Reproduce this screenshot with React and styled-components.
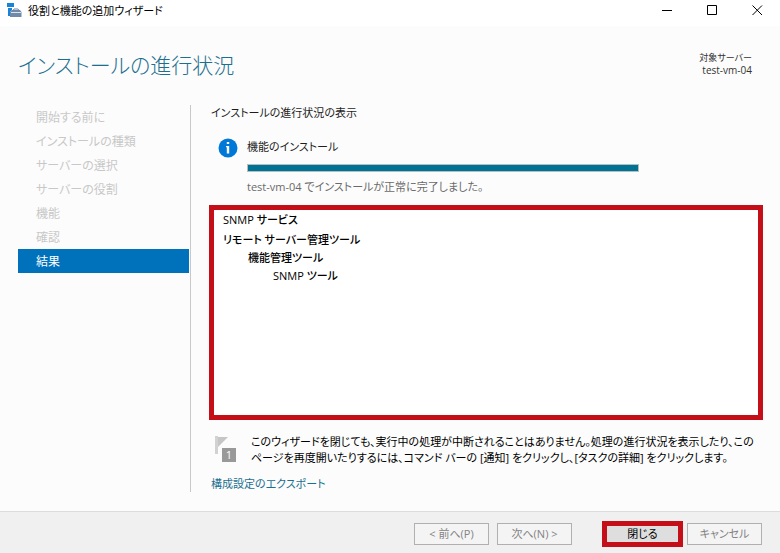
import React from "react";
import styled, { createGlobalStyle } from "styled-components";

const GlobalStyle = createGlobalStyle`
  *, *::before, *::after { box-sizing: border-box; }
  body {
    margin: 0;
    background: #fcfcfc;
    color: #1e1e1e;
    font-family: "Open Sans", "Noto Sans CJK JP", sans-serif;
    font-size: 11px;
    line-height: 18px;
    font-feature-settings: "palt";
  }
  button { font: inherit; font-feature-settings: inherit; }
`;

const Window = styled.div`
  display: flex;
  flex-direction: column;
  min-height: 100vh;
`;

const TitleBar = styled.div`
  display: flex;
  align-items: center;
  height: 26px;
  padding-left: 7px;
  background: #fff;
  color: #000;
  & > svg { margin-bottom: 6px; }
`;

const WindowTitle = styled.span`
  flex: 1;
  margin-left: 6px;
  padding-bottom: 4px;
  white-space: nowrap;
`;

const CaptionButton = styled.button`
  display: flex;
  align-items: center;
  justify-content: center;
  width: 45px;
  height: 26px;
  padding: 0 0 6px;
  border: 0;
  background: transparent;
  color: #000;
`;

const Header = styled.header`
  display: flex;
  justify-content: space-between;
  align-items: flex-start;
  height: 79px;
  padding: 22px 28px 0 18px;
`;

const Heading = styled.h1`
  margin: 0;
  color: #1b6f8f;
  font-size: 21px;
  font-weight: 300;
  line-height: 34px;
  white-space: nowrap;
`;

const Target = styled.div`
  padding-top: 3px;
  color: #333;
  line-height: 13px;
  text-align: right;
  white-space: nowrap;
`;

const TargetLabel = styled.div`
  font-size: 9px;
`;

const TargetName = styled.div`
  font-size: 10px;
`;

const Body = styled.div`
  display: flex;
  flex: 1;
  padding: 0 17px 19px 18px;
`;

const Steps = styled.nav`
  flex: 0 0 173px;
  padding-right: 1px;
  border-right: 1px solid #c8c8c8;
`;

const StepList = styled.ol`
  margin: 0;
  padding: 0;
  list-style: none;
`;

const Step = styled.li`
  height: 24px;
  padding-left: 18px;
  font-size: 12px;
  line-height: 26px;
  color: ${(p) => (p.$current ? "#fff" : "#c8c8c8")};
  background: ${(p) => (p.$current ? "#0072bc" : "transparent")};
`;

const Main = styled.main`
  display: flex;
  flex: 1;
  flex-direction: column;
  min-width: 0;
  padding-left: 18px;
`;

const Intro = styled.p`
  margin: 0 0 16px 2px;
  line-height: 16px;
`;

const Status = styled.section`
  display: grid;
  grid-template-columns: 20px 1fr;
  column-gap: 9px;
  padding-left: 9px;
  margin-bottom: 10px;
  & > svg { margin-top: 1px; }
`;

const StatusTitle = styled.div`
  line-height: 20px;
`;

const Progress = styled.div`
  width: 76%;
  height: 8px;
  margin: 7px 0;
  border: 1px solid #bcbcbc;
  background: #007394;
`;

const StatusText = styled.div`
  color: #6a6a6a;
  line-height: 16px;
`;

const Results = styled.ul`
  flex: 1;
  min-height: 120px;
  margin: 0;
  padding: 1px 9px;
  border: 5px solid #c50f18;
  background: #fff;
  color: #000;
  font-weight: 500;
  list-style: none;
`;

const Result = styled.li`
  padding-left: ${(p) => p.$level * 25}px;
  margin-bottom: ${(p) => (p.$spaced ? 2 : 0)}px;
`;

const Note = styled.div`
  display: flex;
  gap: 14px;
  margin-top: 14px;
  padding-left: 6px;
  color: #000;
  & > svg { flex: none; margin-top: 2px; }
`;

const NoteText = styled.p`
  margin: 0;
  line-height: 16px;
`;

const NoteLine = styled.span`
  display: block;
  white-space: nowrap;
`;

const ExportLink = styled.a`
  align-self: flex-start;
  margin: 10px 0 0 2px;
  color: #1b6f8f;
  line-height: 16px;
  text-decoration: none;
`;

const Footer = styled.footer`
  display: flex;
  justify-content: flex-end;
  align-items: center;
  height: 42px;
  padding: 2px 18px 0 0;
  border-top: 1px solid #dcdcdc;
  background: #f0f0f0;
`;

const FooterButton = styled.button`
  width: 75px;
  height: 22px;
  margin-left: ${(p) => p.$gap}px;
  padding: 0;
  border: 1px solid #b0b0b0;
  background: #f4f4f4;
  color: #838383;
  line-height: 18px;
  white-space: nowrap;
`;

const CloseButton = styled(FooterButton)`
  width: 81px;
  height: 26px;
  border: 5px solid #c50f18;
  background: #dedede;
  color: #000;
  line-height: 16px;
`;

const steps = [
  "開始する前に",
  "インストールの種類",
  "サーバーの選択",
  "サーバーの役割",
  "機能",
  "確認",
  "結果",
];

const results = [
  { text: "SNMP サービス", level: 0, spaced: true },
  { text: "リモート サーバー管理ツール", level: 0 },
  { text: "機能管理ツール", level: 1 },
  { text: "SNMP ツール", level: 2 },
];

const ServerIcon = () => (
  <svg width="15" height="14" viewBox="0 0 15 14" aria-hidden="true">
    <path d="M0 0h7v4H0zM1 5h4v2L3 9v4H1z" fill="#1883d7" />
    <path d="M6 7.500L7 6h4l1 1.500" fill="none" stroke="#7189a8" />
    <path d="M5 7h8l1.500 2v5H3V9z" fill="#7189a8" />
    <path d="M4 9.500h10" stroke="#dbe3ec" />
  </svg>
);

const InfoIcon = () => (
  <svg width="20" height="20" viewBox="0 0 20 20" aria-hidden="true">
    <circle cx="10" cy="10" r="9.500" fill="#0078d7" />
    <path d="M8.800 4h2.400v2H8.800zM8 8h3.200v7.500H8.800V9.200H8z" fill="#fff" />
  </svg>
);

const FlagIcon = () => (
  <svg width="22" height="27" viewBox="0 0 22 27" aria-hidden="true">
    <path d="M0 0h3v18H0z" fill="#d2d2d2" />
    <path d="M3 1h10L3 11z" fill="#c6c6c6" />
    <path d="M7 12h14v14H7z" fill="#999" />
    <text x="14" y="23" textAnchor="middle" fontSize="11" fill="#fff">1</text>
  </svg>
);

export default function App() {
  return (
    <Window>
      <GlobalStyle />
      <TitleBar>
        <ServerIcon />
        <WindowTitle>役割と機能の追加ウィザード</WindowTitle>
        <CaptionButton aria-label="最小化">
          <svg width="11" height="11"><path d="M0 5.500h10" stroke="currentColor" /></svg>
        </CaptionButton>
        <CaptionButton aria-label="最大化">
          <svg width="11" height="11"><path d="M.5.500h9v9h-9z" fill="none" stroke="currentColor" /></svg>
        </CaptionButton>
        <CaptionButton aria-label="ウィンドウを閉じる">
          <svg width="11" height="11"><path d="M.5.500l9.500 9.500M10 .500L.5 10" stroke="currentColor" /></svg>
        </CaptionButton>
      </TitleBar>
      <Header>
        <Heading>インストールの進行状況</Heading>
        <Target>
          <TargetLabel>対象サーバー</TargetLabel>
          <TargetName>test-vm-04</TargetName>
        </Target>
      </Header>
      <Body>
        <Steps aria-label="手順">
          <StepList>
            {steps.map((s, i) => (
              <Step key={s} $current={i === steps.length - 1}>{s}</Step>
            ))}
          </StepList>
        </Steps>
        <Main>
          <Intro>インストールの進行状況の表示</Intro>
          <Status>
            <InfoIcon />
            <div>
              <StatusTitle>機能のインストール</StatusTitle>
              <Progress role="progressbar" aria-label="機能のインストール" aria-valuenow={100} />
              <StatusText>test-vm-04 でインストールが正常に完了しました。</StatusText>
            </div>
          </Status>
          <Results>
            {results.map((r) => (
              <Result key={r.text} $level={r.level} $spaced={r.spaced}>{r.text}</Result>
            ))}
          </Results>
          <Note>
            <FlagIcon />
            <NoteText>
              <NoteLine>このウィザードを閉じても、実行中の処理が中断されることはありません。処理の進行状況を表示したり、この</NoteLine>
              <NoteLine>ページを再度開いたりするには、コマンド バーの [通知] をクリックし、[タスクの詳細] をクリックします。</NoteLine>
            </NoteText>
          </Note>
          <ExportLink href="#export">構成設定のエクスポート</ExportLink>
        </Main>
      </Body>
      <Footer>
        <FooterButton disabled>&lt; 前へ(P)</FooterButton>
        <FooterButton disabled $gap={8}>次へ(N) &gt;</FooterButton>
        <CloseButton $gap={30}>閉じる</CloseButton>
        <FooterButton disabled $gap={4}>キャンセル</FooterButton>
      </Footer>
    </Window>
  );
}
